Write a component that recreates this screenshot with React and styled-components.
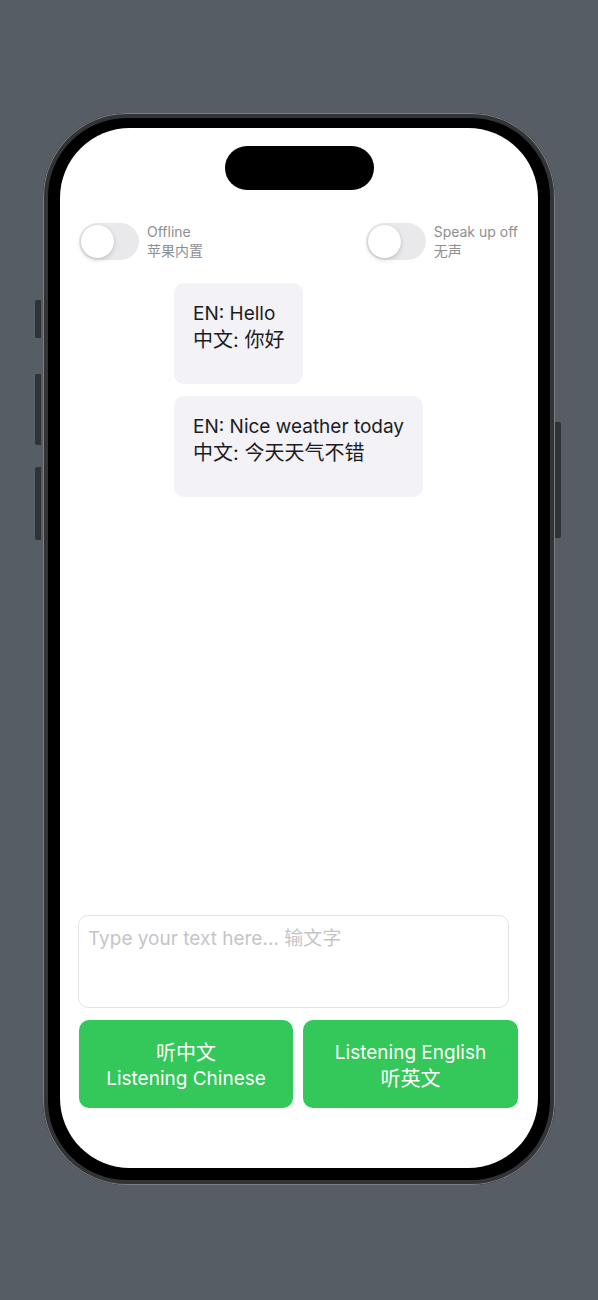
import React from "react";
import styled, { createGlobalStyle } from "styled-components";

const Global = createGlobalStyle`
  html, body {
    margin: 0;
    padding: 0;
    background: #575d65;
  }
  body {
    font-family: Inter, "Noto Sans CJK SC", sans-serif;
  }
  * { box-sizing: border-box; }
`;

const Stage = styled.div`
  display: flex;
  align-items: flex-start;
  padding: 113px 0 0 35px;
  height: 1300px;
`;

const SideColumn = styled.div`
  display: flex;
  flex-direction: column;
  width: 6px;
  padding-top: ${(p) => p.$top}px;
  margin-right: ${(p) => p.$mr || 0}px;
`;

const SideKey = styled.div`
  width: 6px;
  height: ${(p) => p.$h}px;
  margin-top: ${(p) => p.$gap || 0}px;
  background: #2f3236;
  border-radius: ${(p) => (p.$right ? "0 2px 2px 0" : "2px 0 0 2px")};
`;

const Phone = styled.div`
  width: 512px;
  height: 1072px;
  border-radius: 84px;
  background: #000;
  box-shadow: inset 0 0 0 1px #7a7d82, inset 0 0 0 5px #323335;
  padding: 15px 17px 17px 17px;
  display: flex;
`;

const Screen = styled.div`
  flex: 1;
  background: #fff;
  border-radius: 70px;
  display: flex;
  flex-direction: column;
  align-items: stretch;
  padding: 18px 20px 60px 19px;
  overflow: hidden;
`;

const Island = styled.div`
  align-self: center;
  width: 149px;
  height: 44px;
  border-radius: 22px;
  background: #000;
  margin-left: 1px;
`;

const ToggleRow = styled.div`
  display: flex;
  justify-content: space-between;
  align-items: center;
  margin-top: 32px;
`;

const ToggleGroup = styled.div`
  display: flex;
  align-items: center;
  gap: 8px;
`;

const Track = styled.div`
  width: 60px;
  height: 37px;
  border-radius: 19px;
  background: #e9e9eb;
  padding: 2px;
  display: flex;
  align-items: center;
`;

const Knob = styled.div`
  width: 33px;
  height: 33px;
  border-radius: 50%;
  background: #fff;
  box-shadow: 0 2px 5px rgba(0, 0, 0, 0.16), 0 0 1px rgba(0, 0, 0, 0.12);
`;

const ToggleLabel = styled.div`
  font-size: 14px;
  line-height: 19px;
  color: #8e8e93;
`;

const Messages = styled.div`
  display: flex;
  flex-direction: column;
  align-items: flex-start;
  gap: 12px;
  margin: 23px 0 0 95px;
`;

const Bubble = styled.div`
  background: #f2f2f7;
  border-radius: 10px;
  padding: 18px 19px 30px 19px;
  font-size: 19px;
  line-height: 26px;
  color: #1c1c1e;
`;

const Zh = styled.span`
  font-size: 20px;
`;

const Spacer = styled.div`
  flex: 1;
`;

const Input = styled.textarea`
  display: block;
  width: 431px;
  height: 93px;
  margin-left: -1px;
  border: 1px solid #e4e4e7;
  border-radius: 10px;
  padding: 10px 9px;
  font-family: Inter, "Noto Sans CJK SC", sans-serif;
  font-size: 19px;
  line-height: 26px;
  color: #1c1c1e;
  resize: none;
  outline: none;
  background: #fff;
  &::placeholder {
    color: #c5c5c8;
  }
`;

const ButtonRow = styled.div`
  display: grid;
  grid-template-columns: 214px 215px;
  gap: 10px;
  margin-top: 12px;
`;

const ListenButton = styled.button`
  height: 88px;
  border: none;
  border-radius: 10px;
  background: #34c759;
  color: #fff;
  font-family: Inter, "Noto Sans CJK SC", sans-serif;
  font-size: 19px;
  line-height: 26px;
  display: flex;
  flex-direction: column;
  align-items: center;
  justify-content: center;
  padding: 3px 0 0;
`;

const toggles = [
  { en: "Offline", zh: "苹果内置" },
  { en: "Speak up off", zh: "无声" },
];

const messages = [
  { en: "Hello", zh: "你好" },
  { en: "Nice weather today", zh: "今天天气不错" },
];

export default function App() {
  return (
    <>
      <Global />
      <Stage>
        <SideColumn $top={187} $mr={2}>
          <SideKey $h={38} />
          <SideKey $h={71} $gap={36} />
          <SideKey $h={73} $gap={22} />
        </SideColumn>
        <Phone>
          <Screen>
            <Island />
            <ToggleRow>
              {toggles.map((t) => (
                <ToggleGroup key={t.en}>
                  <Track>
                    <Knob />
                  </Track>
                  <ToggleLabel>
                    {t.en}
                    <br />
                    {t.zh}
                  </ToggleLabel>
                </ToggleGroup>
              ))}
            </ToggleRow>
            <Messages>
              {messages.map((m) => (
                <Bubble key={m.en}>
                  EN: {m.en}
                  <br />
                  <Zh>中文: {m.zh}</Zh>
                </Bubble>
              ))}
            </Messages>
            <Spacer />
            <Input placeholder="Type your text here... 输文字" />
            <ButtonRow>
              <ListenButton>
                <Zh>听中文</Zh>
                <span>Listening Chinese</span>
              </ListenButton>
              <ListenButton>
                <span>Listening English</span>
                <Zh>听英文</Zh>
              </ListenButton>
            </ButtonRow>
          </Screen>
        </Phone>
        <SideColumn $top={309}>
          <SideKey $h={116} $right />
        </SideColumn>
      </Stage>
    </>
  );
}
